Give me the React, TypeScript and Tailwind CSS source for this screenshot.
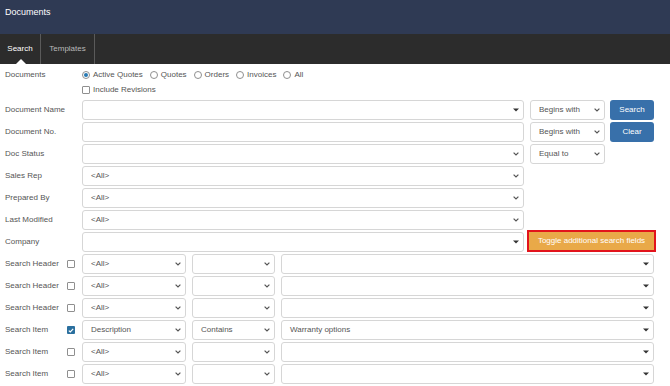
import React from "react";

const font = "font-['Liberation_Sans',Arial,sans-serif]";

function Chevron() {
  return (
    <svg width="6" height="4" viewBox="0 0 6 4" className="shrink-0">
      <path d="M0.6 0.6 L3 3 L5.4 0.6" fill="none" stroke="#555" strokeWidth="1.2" />
    </svg>
  );
}

function Caret() {
  return (
    <svg width="6" height="4" viewBox="0 0 6 4" className="shrink-0">
      <polygon points="0,0.5 6,0.5 3,3.6" fill="#333" />
    </svg>
  );
}

interface FieldProps {
  width: string;
  text?: string;
  arrow?: "chevron" | "caret" | "none";
}

function Field({ width, text = "", arrow = "chevron" }: FieldProps) {
  return (
    <div
      className={`${width} flex h-[20px] shrink-0 items-center justify-between rounded-[3px] border border-[#d6d6d6] bg-white pl-[8px] pr-[4px] text-[8px] text-[#555]`}
    >
      <span>{text}</span>
      {arrow === "chevron" && <Chevron />}
      {arrow === "caret" && <Caret />}
    </div>
  );
}

function Radio({ label, checked = false }: { label: string; checked?: boolean }) {
  return (
    <label className="mr-[7px] flex items-center gap-[3px]">
      <span className="flex h-[8px] w-[8px] items-center justify-center rounded-full border border-[#8f8f8f] bg-white">
        {checked && <span className="h-[4px] w-[4px] rounded-full bg-[#2779b3]" />}
      </span>
      <span>{label}</span>
    </label>
  );
}

function Check({ checked = false }: { checked?: boolean }) {
  return checked ? (
    <span className="flex h-[8px] w-[8px] items-center justify-center rounded-[1px] bg-[#2a6f9e]">
      <svg width="6" height="5" viewBox="0 0 6 5">
        <path d="M0.8 2.6 L2.3 4 L5.2 0.8" fill="none" stroke="#fff" strokeWidth="1.2" />
      </svg>
    </span>
  ) : (
    <span className="h-[8px] w-[8px] rounded-[1px] border border-[#8f8f8f] bg-white" />
  );
}

const mainRows = [
  { label: "Document Name", text: "", arrow: "caret" as const, op: "Begins with", button: "Search" },
  { label: "Document No.", text: "", arrow: "none" as const, op: "Begins with", button: "Clear" },
  { label: "Doc Status", text: "", arrow: "chevron" as const, op: "Equal to" },
  { label: "Sales Rep", text: "<All>", arrow: "chevron" as const },
  { label: "Prepared By", text: "<All>", arrow: "chevron" as const },
  { label: "Last Modified", text: "<All>", arrow: "chevron" as const },
];

const searchRows = [
  { label: "Search Header", field: "<All>", op: "", value: "", checked: false },
  { label: "Search Header", field: "<All>", op: "", value: "", checked: false },
  { label: "Search Header", field: "<All>", op: "", value: "", checked: false },
  { label: "Search Item", field: "Description", op: "Contains", value: "Warranty options", checked: true },
  { label: "Search Item", field: "<All>", op: "", value: "", checked: false },
  { label: "Search Item", field: "<All>", op: "", value: "", checked: false },
];

export default function App() {
  return (
    <div className={`${font} h-[386px] w-[670px] overflow-hidden bg-white text-[8px] text-[#555]`}>
      <header className="flex h-[34px] items-start bg-[#2f3a54] px-[5px] pt-[6px] text-[9px] text-white">
        Documents
      </header>

      <nav className="flex h-[30px] bg-[#2c2c2c] text-[8px]">
        <div className="relative flex w-[41px] items-center justify-center border-r border-[#5a5a5a] text-white">
          Search
          <span className="absolute bottom-0 left-[16px] h-0 w-0 border-x-[5px] border-b-[5px] border-x-transparent border-b-white" />
        </div>
        <div className="flex w-[54px] items-center justify-center border-r border-[#5a5a5a] text-[#b9b9b9]">
          Templates
        </div>
      </nav>

      <main className="px-[5px] pt-[3px]">
        <div className="flex h-[16px] items-center">
          <div className="w-[77px]">Documents</div>
          <div className="flex items-center">
            <Radio label="Active Quotes" checked />
            <Radio label="Quotes" />
            <Radio label="Orders" />
            <Radio label="Invoices" />
            <Radio label="All" />
          </div>
        </div>
        <div className="flex h-[14px] items-center pl-[77px]">
          <label className="flex items-center gap-[3px]">
            <Check />
            <span>Include Revisions</span>
          </label>
        </div>

        <div className="mt-[3px] flex flex-col gap-[2px]">
          {mainRows.map((row) => (
            <div key={row.label} className="flex h-[20px] items-center">
              <div className="w-[77px] shrink-0">{row.label}</div>
              <Field width="w-[442px]" text={row.text} arrow={row.arrow} />
              {row.op && (
                <div className="ml-[6px]">
                  <Field width="w-[75px]" text={row.op} />
                </div>
              )}
              {row.button && (
                <button className="ml-[5px] h-[20px] w-[44px] rounded-[3px] bg-[#3870aa] text-[8px] text-white">
                  {row.button}
                </button>
              )}
            </div>
          ))}

          <div className="flex h-[20px] items-start">
            <div className="flex h-[20px] w-[77px] shrink-0 items-center">Company</div>
            <Field width="w-[442px]" arrow="caret" />
            <button className="ml-[3px] -mt-[2px] -mb-[2px] h-[22px] w-[129px] shrink-0 border-2 border-[#e2141c] bg-[#e9a948] text-[8px] text-white">
              Toggle additional search fields
            </button>
          </div>

          {searchRows.map((row, i) => (
            <div key={i} className="flex h-[20px] items-center">
              <div className="w-[62px] shrink-0">{row.label}</div>
              <Check checked={row.checked} />
              <div className="ml-[7px]">
                <Field width="w-[104px]" text={row.field} />
              </div>
              <div className="ml-[6px]">
                <Field width="w-[83px]" text={row.op} />
              </div>
              <div className="ml-[6px]">
                <Field width="w-[373px]" text={row.value} arrow="caret" />
              </div>
            </div>
          ))}
        </div>
      </main>
    </div>
  );
}
